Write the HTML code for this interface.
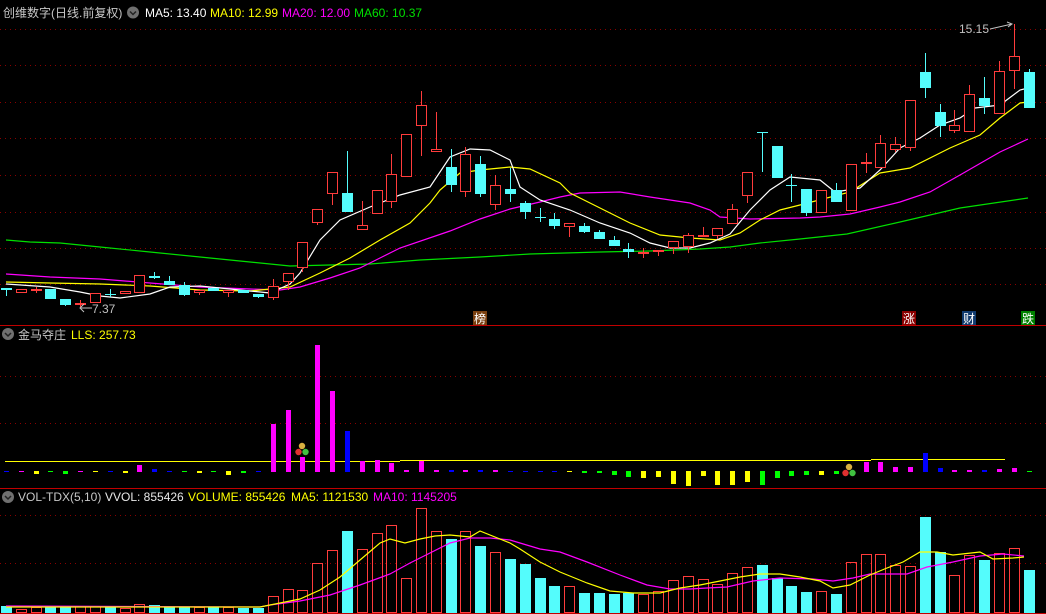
<!DOCTYPE html>
<html><head><meta charset="utf-8">
<style>
html,body{margin:0;padding:0;background:#000;width:1046px;height:614px;overflow:hidden}
svg{display:block}
text{font-family:"Liberation Sans","Noto Sans CJK SC",sans-serif;font-size:12px}
</style></head>
<body>
<svg id="s" width="1046" height="614" xmlns="http://www.w3.org/2000/svg">
<rect width="1046" height="614" fill="#000"/>
<g id="grid" stroke="#8a0000" stroke-width="1" stroke-dasharray="1,4"></g>
<line x1="0" y1="325.5" x2="1046" y2="325.5" stroke="#c00000"/>
<line x1="0" y1="488.5" x2="1046" y2="488.5" stroke="#c00000"/>
<line x1="0" y1="613.5" x2="1046" y2="613.5" stroke="#c00000"/>
<g id="g"></g>
<!-- header 1 -->
<text x="3" y="17" fill="#c8c8c8">创维数字(日线.前复权)</text>
<circle cx="133" cy="12.5" r="6" fill="#707070"/><path d="M130 11.5l3 3 3-3" stroke="#222" stroke-width="1.5" fill="none"/>
<text x="145" y="17" fill="#fff">MA5: 13.40</text>
<text x="210" y="17" fill="#ffff00">MA10: 12.99</text>
<text x="282" y="17" fill="#ff00ff">MA20: 12.00</text>
<text x="354" y="17" fill="#00e000">MA60: 10.37</text>
<!-- header 2 -->
<circle cx="8" cy="334" r="6" fill="#707070"/><path d="M5 333l3 3 3-3" stroke="#222" stroke-width="1.5" fill="none"/>
<text x="18" y="339" fill="#c8c8c8">金马夺庄</text>
<text x="71" y="339" fill="#ffff00">LLS: 257.73</text>
<!-- header 3 -->
<circle cx="8" cy="497" r="6" fill="#707070"/><path d="M5 496l3 3 3-3" stroke="#222" stroke-width="1.5" fill="none"/>
<text x="18" y="501" fill="#c8c8c8">VOL-TDX(5,10)</text>
<text x="105" y="501" fill="#e8e8e8">VVOL: 855426</text>
<text x="188" y="501" fill="#ffff00">VOLUME: 855426</text>
<text x="291" y="501" fill="#ffff00">MA5: 1121530</text>
<text x="373" y="501" fill="#ff00ff">MA10: 1145205</text>
<!-- price labels -->
<text x="959" y="33" fill="#c0c0c0">15.15</text>
<path d="M990 29 L1012 24 M1007 22 L1012 24 L1008 27" stroke="#c0c0c0" fill="none"/>
<path d="M80 308 H92 M84 304 L80 308 L84 312" stroke="#c0c0c0" fill="none"/>
<text x="92" y="313" fill="#c0c0c0">7.37</text>
<!-- signal labels -->
<rect x="473" y="311" width="14" height="14" fill="#7a4010"/><text x="474" y="323" fill="#fff" style="font-size:12px">榜</text>
<rect x="902" y="311" width="14" height="14" fill="#8b0000"/><text x="903" y="323" fill="#fff">涨</text>
<rect x="962" y="311" width="14" height="14" fill="#103a6e"/><text x="963" y="323" fill="#fff">财</text>
<rect x="1021" y="311" width="14" height="14" fill="#008000"/><text x="1022" y="323" fill="#fff">跌</text>
</svg>
<script>
var NS="http://www.w3.org/2000/svg",G=document.getElementById('g'),GR=document.getElementById('grid');
function el(t,a,p){var e=document.createElementNS(NS,t);for(var k in a)e.setAttribute(k,a[k]);(p||G).appendChild(e);return e;}
[29,65,102,138,175,212,248,284,376,423,515,563].forEach(function(y){el('line',{x1:0,y1:y+.5,x2:1046,y2:y+.5},GR);});
function X(i){return 6+14.82*i;}
var RED="#ff3c3c",CY="#54fcfc";
var C=[["c",288,290,288,296],["r",289,293,289,293],["r",289,290,287,293],["c",289,299,289,299],["c",299,305,299,306],["r",303,305,300,307],["r",293,303,293,303],["c",294,295,289,297],["r",291,294,291,294],["r",275,293,275,293],
["c",276,278,272,279],["c",281,285,276,285],["c",285,295,282,296],["r",290,293,290,295],["c",288,291,288,291],["r",290,293,290,297],["c",290,293,290,293],["c",294,297,294,298],["r",286,298,279,300],["r",273,282,273,290],
["r",242,268,242,272],["r",209,223,209,225],["r",172,194,172,205],["c",193,212,151,212],["r",225,230,201,230],["r",190,214,190,214],["r",174,202,154,208],["r",134,177,134,177],["r",105,126,91,156],["r",149,152,112,152],
["c",167,185,149,192],["r",154,192,147,197],["c",164,194,156,197],["r",185,205,175,210],["c",189,194,168,202],["c",203,212,201,219],["c",217,218,208,222],["c",219,226,213,229],["r",223,227,223,237],["c",226,232,223,233],
["c",232,239,230,239],["c",240,246,236,246],["c",249,252,243,258],["r",252,253,248,258],["r",250,251,250,256],["r",241,248,241,254],["r",235,247,233,253],["r",235,237,227,237],["r",228,236,228,239],["r",209,224,204,224],
["r",172,196,172,203],["c",132,133,132,172],["c",146,178,146,178],["c",185,186,174,202],["c",189,213,189,216],["r",190,213,190,213],["c",190,202,183,202],["r",164,211,164,211],["r",162,163,153,173],["r",143,168,135,168],
["r",144,150,137,152],["r",100,148,100,151],["c",72,88,53,98],["c",112,126,104,137],["r",125,131,110,133],["r",94,132,85,132],["c",98,106,77,114],["r",71,114,61,114],["r",56,71,24,89],["c",72,108,69,108]];
// lines
function pl(pts,c){el('polyline',{points:pts.map(function(p){return p.join(',')}).join(' '),fill:'none',stroke:c,'stroke-width':1.2});}
pl([[6,240],[30,242],[60,243],[100,247],[150,252],[200,257],[250,262],[290,266],[330,265],[370,264],[420,260],[480,257],[530,254],[600,252],[650,251],[700,249],[730,247],[760,243],[800,239],[847,234],[900,222],[960,208],[1028,198]],"#00e000");
pl([[6,274],[50,277],[100,279],[150,283],[200,287],[250,289],[280,290],[300,287],[330,278],[360,268],[400,248],[450,231],[480,219],[510,209],[540,202],[560,197],[580,193],[620,192],[650,197],[690,203],[710,210],[720,217],[750,219],[800,218],[820,217],[850,214],[880,207],[900,202],[930,192],[960,175],[1000,152],[1028,139]],"#ff00ff");
pl([[6,282],[50,283],[100,284],[150,286],[200,290],[250,291],[290,287],[320,273],[350,258],[380,240],[410,223],[430,203],[440,190],[460,173],[480,170],[510,167],[530,169],[560,183],[570,193],[600,208],[630,223],[660,235],[690,238],[720,240],[740,233],[760,220],[780,210],[800,205],[850,192],[880,173],[910,168],[950,148],[980,135],[1000,118],[1020,103],[1028,102]],"#ffff00");
pl([[6,284],[50,287],[80,292],[100,296],[120,298],[150,294],[170,287],[200,286],[230,289],[270,293],[290,284],[300,273],[320,240],[340,220],[370,207],[400,195],[430,187],[450,157],[470,149],[490,150],[510,160],[520,187],[540,200],[570,210],[600,223],[630,233],[650,243],[670,248],[690,248],[710,243],[730,234],[750,210],[770,190],[790,177],[820,180],[835,192],[860,188],[880,170],[900,148],[920,138],[940,125],[960,118],[975,108],[1000,105],[1020,90],[1028,88]],"#ffffff");
C.forEach(function(d,i){var x=Math.round(X(i))+.5,col=d[0]=="r"?RED:CY;
 el('line',{x1:x,y1:d[3],x2:x,y2:d[4],stroke:col});
 var h=Math.max(1,d[2]-d[1]);
 if(d[0]=="r"){ if(h<=2) el('rect',{x:x-5.5,y:d[1],width:11,height:2,fill:col}); else el('rect',{x:x-5,y:d[1]+.5,width:10,height:h-1,fill:'#000',stroke:col});}
 else el('rect',{x:x-5.5,y:d[1],width:11,height:h,fill:col});
});
// indicator panel
el('line',{x1:5,y1:461.5,x2:400,y2:461.5,stroke:'#ffff00'});
el('line',{x1:400,y1:460.5,x2:871,y2:460.5,stroke:'#ffff00'});
el('line',{x1:871,y1:459.5,x2:1005,y2:459.5,stroke:'#ffff00'});
var COL={m:"#ff00ff",b:"#0000ff",y:"#ffff00",g:"#00ff00"};
var M=[[471,472,"b"],[471,472,"m"],[471,474,"y"],[471,472,"g"],[471,474,"g"],[471,472,"m"],[471,472,"y"],[471,472,"b"],[471,473,"y"],[465,472,"m"],[469,472,"b"],[471,472,"b"],[471,472,"g"],[471,473,"y"],[471,472,"g"],[471,475,"y"],[471,473,"g"],[471,472,"b"],[424,472,"m"],[410,472,"m"],[457,472,"m"],[345,472,"m"],[391,472,"m"],[431,472,"b"],[461,472,"m"],[460,472,"m"],[463,472,"m"],[470,472,"m"],[461,472,"m"],[470,472,"m"],[470,472,"b"],[470,472,"m"],[470,472,"b"],[470,472,"m"],[471,472,"b"],[471,472,"b"],[471,472,"b"],[471,472,"b"],[471,472,"y"],[471,473,"g"],[471,473,"g"],[471,475,"g"],[471,477,"g"],[471,478,"y"],[471,477,"y"],[471,484,"y"],[471,486,"y"],[471,476,"y"],[471,485,"y"],[471,485,"y"],[471,482,"y"],[471,485,"g"],[471,478,"g"],[471,476,"g"],[471,475,"g"],[471,475,"y"],[471,474,"g"],null,[462,472,"m"],[462,472,"m"],[467,472,"m"],[467,472,"m"],[453,472,"b"],[468,472,"b"],[470,472,"m"],[470,472,"m"],[470,472,"b"],[469,472,"m"],[468,472,"m"],[471,472,"g"]];
M.forEach(function(d,i){if(!d)return;var x=Math.round(X(i));var w=(d[1]-d[0]>1)?5:5;el('rect',{x:x-2,y:d[0],width:w,height:d[1]-d[0],fill:COL[d[2]]});});
function balls(x,y){el('circle',{cx:x,cy:y,r:3.2,fill:'#d8b040'});el('circle',{cx:x-3.5,cy:y+6,r:3.2,fill:'#e03030'});el('circle',{cx:x+3.5,cy:y+6,r:3.2,fill:'#40c040'});}
balls(302,446);balls(849,467);
// volume
var V=[["c",606],["r",609],["r",607],["c",607],["c",607],["r",606],["r",606],["c",607],["r",608],["r",604],["c",605],["c",607],["c",607],["r",607],["c",607],["r",607],["c",608],["c",608],["r",596],["r",589],["r",590],["r",563],["r",550],["c",531],["r",549],["r",533],["r",525],["r",578],["r",508],["r",531],["c",539],["r",531],["c",546],["r",552],["c",559],["c",564],["c",578],["c",586],["r",586],["c",593],["c",593],["c",594],["c",593],["r",594],["r",591],["r",580],["r",576],["r",579],["r",584],["r",573],["r",567],["c",565],["c",578],["c",586],["c",592],["r",591],["c",594],["r",562],["r",554],["r",554],["r",565],["r",566],["c",517],["c",552],["r",575],["r",555],["c",560],["r",553],["r",548],["c",570]];
V.forEach(function(d,i){var x=Math.round(X(i));if(d[0]=="c")el('rect',{x:x-5,y:d[1],width:11,height:613-d[1],fill:CY});else el('rect',{x:x-4.5,y:d[1]+.5,width:10,height:612-d[1],fill:'none',stroke:RED});});
pl([[6,606],[260,607],[270,605],[300,601],[330,595],[360,585],[390,574],[410,563],[430,553],[450,543],[470,538],[490,538],[510,540],[520,543],[540,549],[560,552],[587,562],[620,575],[647,585],[670,589],[690,589],[707,588],[727,587],[753,581],[780,578],[813,579],[833,581],[853,578],[870,574],[907,574],[927,567],[953,562],[980,556],[1003,554],[1024,556]],"#ff00ff");
pl([[6,607],[260,607],[270,605],[300,599],[320,590],[340,577],[360,560],[380,543],[390,539],[405,543],[420,539],[435,536],[450,535],[470,537],[480,531],[510,543],[520,549],[540,562],[560,572],[587,583],[610,591],[633,593],[660,593],[680,588],[700,585],[720,581],[740,577],[760,574],[780,574],[800,577],[820,581],[833,588],[850,585],[870,575],[887,568],[903,562],[920,552],[937,552],[953,555],[980,552],[993,559],[1013,558],[1024,557]],"#ffff00");
</script>
</body></html>
